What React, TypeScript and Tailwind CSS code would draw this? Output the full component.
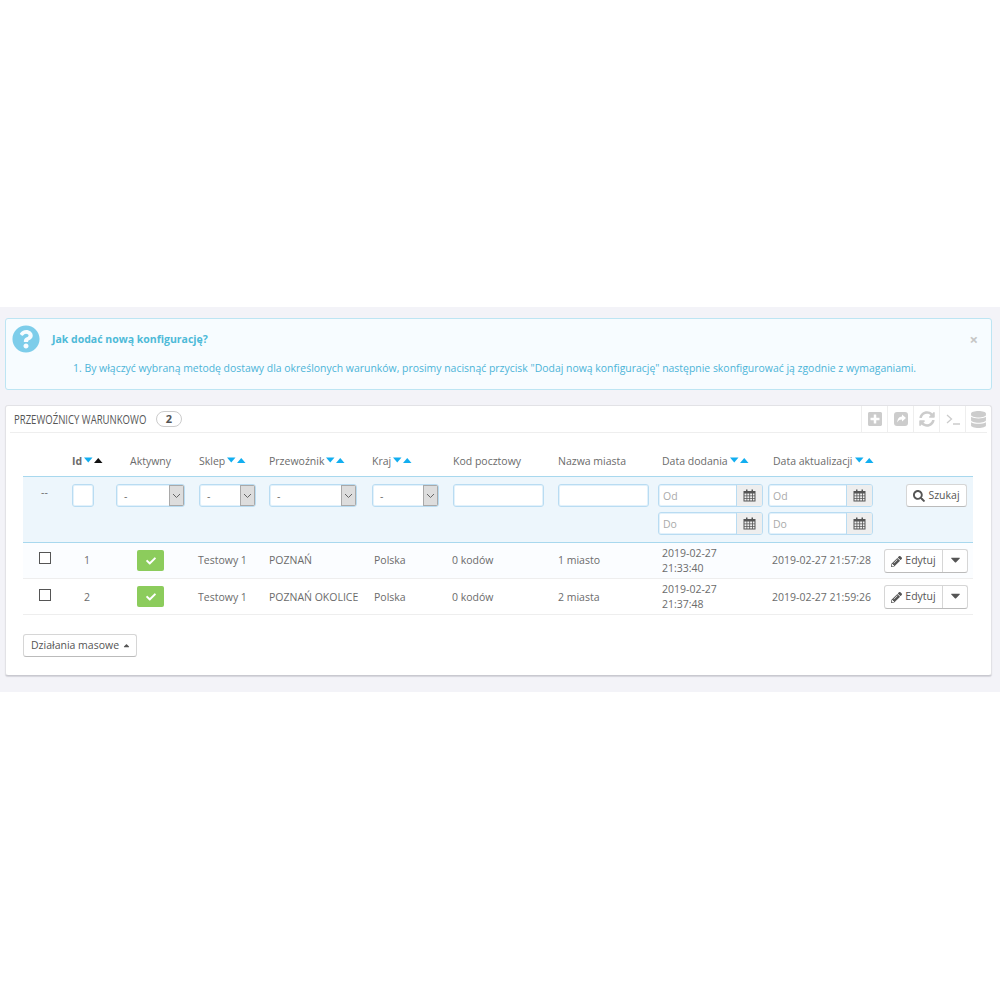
import { FaQuestionCircle, FaPlusSquare, FaSyncAlt, FaDatabase, FaSearch, FaPencilAlt, FaCheck, FaCaretDown, FaCaretUp } from "react-icons/fa";

const cols = "grid grid-cols-[49px_44px_83px_70px_103px_81px_105px_100px_110px_116px_89px]";

function Sort({ active }: { active?: boolean }) {
  return (
    <svg width="19" height="7" viewBox="0 0 19 7" className="relative -top-[1px] ml-[2px] inline-block shrink-0">
      <path d="M0 0.5h8.5L4.25 5.5z" fill="#12aef0" />
      <path d="M10 6h8.5L14.25 1z" fill={active ? "#111111" : "#12aef0"} />
    </svg>
  );
}

function Head({ label, sort, bold, active }: { label: string; sort?: boolean; bold?: boolean; active?: boolean }) {
  return (
    <div className={`flex h-[31px] items-center whitespace-nowrap pt-[2px] text-[10.5px] text-[#6b6b6b] ${bold ? "font-bold" : ""}`}>
      {label}
      {sort && <Sort active={active} />}
    </div>
  );
}

const field = "rounded-[3px] border border-[#b9dcf2] shadow-[inset_0_0_0_1px_#e2f1fb]";

function Select({ w }: { w: string }) {
  return (
    <div className={`flex h-[23px] overflow-hidden bg-white ${field} ${w}`}>
      <div className="flex-1 pl-[7px] pt-[4px] text-[10.5px] text-[#6b6b6b]">-</div>
      <div className="flex w-[15px] items-center justify-center border border-[#a9a9a9] bg-[#dddddd]">
        <svg width="9" height="6" viewBox="0 0 9 6"><path d="M1 1l3.5 3.5L8 1" fill="none" stroke="#666666" strokeWidth="1" /></svg>
      </div>
    </div>
  );
}

function Calendar() {
  return (
    <svg width="13" height="13" viewBox="0 0 13 13">
      <path d="M3 0.5h1.5v1.5h4V0.5H10v1.5h2.5v10.5H.5V2H3z" fill="#555555" />
      <path d="M1.5 4.5h2v2h-2zM4.3 4.5h2v2h-2zM7.1 4.5h2v2h-2zM9.9 4.5h1.6v2H9.9zM1.5 7.3h2v2h-2zM4.3 7.3h2v2h-2zM7.1 7.3h2v2h-2zM9.9 7.3h1.6v2H9.9zM1.5 10h2v1.5h-2zM4.3 10h2v1.5h-2zM7.1 10h2v1.5h-2zM9.9 10h1.6v1.5H9.9z" fill="#eeeeee" />
    </svg>
  );
}

function DateInput({ ph }: { ph: string }) {
  return (
    <div className={`flex h-[23px] w-[105px] overflow-hidden bg-white ${field}`}>
      <div className="flex-1 pl-[4px] pt-[4px] text-[10.5px] text-[#aaaaaa]">{ph}</div>
      <div className="flex w-[26px] items-center justify-center border-l border-[#b9dcf2] bg-[#eeeeee]">
        <Calendar />
      </div>
    </div>
  );
}

function Row({ id, name, city, d1, d2, t, last }: { id: string; name: string; city: string; d1: string; d2: string; t: string; last?: boolean }) {
  const cell = `flex items-center text-[10.5px] text-[#6b6b6b] ${last ? "pt-[3px]" : "pt-[1px]"}`;
  return (
    <div className={`${cols} h-[36px] border-b ${last ? "border-[#eeeeee] bg-white" : "border-[#eeeeee] bg-[#fbfdff]"}`}>
      <div className={`flex items-start justify-start pl-[16px] ${last ? "pt-[10px]" : "pt-[9px]"}`}>
        <span className="block h-[12px] w-[12px] border border-[#555555] bg-white" />
      </div>
      <div className={`${cell} pl-[12px]`}>{id}</div>
      <div className="flex items-center pl-[21px]">
        <span className="flex h-[21px] w-[27px] items-center justify-center rounded-[2px] bg-[#8ccc5c] text-[10px] text-white"><FaCheck /></span>
      </div>
      <div className={`${cell} -ml-px`}>Testowy 1</div>
      <div className={`${cell} whitespace-nowrap`}>{name}</div>
      <div className={`${cell} pl-[2px]`}>Polska</div>
      <div className={`${cell} -ml-px`}>0 kodów</div>
      <div className={cell}>{city}</div>
      <div className={`flex items-center pl-[4px] pt-[1px] text-[10.5px] leading-[15px] text-[#6b6b6b]`}>{d1}<br />{d2}</div>
      <div className={`${cell} whitespace-nowrap pl-[4px]`}>{t}</div>
      <div className="flex items-center">
        <div className="flex h-[24px] w-[84px] rounded-[3px] border border-[#d6d6d6] border-b-[#bbbbbb] bg-white text-[10.5px] text-[#555555]">
          <div className="flex w-[58px] items-center justify-center gap-[3px] border-r border-[#d6d6d6] pt-[1px]"><FaPencilAlt className="text-[11px]" />Edytuj</div>
          <div className="flex flex-1 items-center justify-center pb-[2px] text-[15px]"><FaCaretDown /></div>
        </div>
      </div>
    </div>
  );
}

const Tool = ({ children }: { children: React.ReactNode }) => (
  <div className="flex h-[27px] w-[26px] items-center justify-center border-l border-[#eeeeee] text-[16px] text-[#cccccc]">{children}</div>
);

export default function App() {
  return (
    <div className="min-h-[1000px] bg-white font-['Open_Sans',sans-serif]">
      <div className="h-[307px]" />
      <div className="bg-[#f3f3f8] pb-[16px] pl-[5px] pr-[8px] pt-[11px]">
        <div className="flex h-[72px] flex-col rounded-[3px] border border-[#bde5f3] bg-[#f7fcff]">
          <div className="relative flex h-[41px] items-center pl-[46px] text-[10.5px] font-bold text-[#4ebad8]">
            Jak dodać nową konfigurację?
            <span className="absolute left-[6px] top-[6px] text-[28px] text-[#7dcdea]"><FaQuestionCircle /></span>
            <span className="absolute right-[13px] top-[10px] text-[15px] font-bold leading-[20px] text-[#c6c6c6]">×</span>
          </div>
          <div className="pl-[67px] pt-[1px] text-[10.45px] text-[#4cb4d8]">
            1. By włączyć wybraną metodę dostawy dla określonych warunków, prosimy nacisnąć przycisk "Dodaj nową konfigurację" następnie skonfigurować ją zgodnie z wymaganiami.
          </div>
        </div>

        <div className="mt-[15px] h-[271px] rounded-[3px] border border-[#e2e2e6] border-b-[#c9c9d0] bg-white shadow-[0_1px_1px_#d5d5dc]">
          <div className="mx-[4px] flex h-[27px] items-center justify-between border-b border-[#eeeeee]">
            <div className="flex items-center pl-[4px]">
              <span className="w-[134px] origin-left scale-x-[0.735] whitespace-nowrap text-[13px] leading-none text-[#555555]">PRZEWOŹNICY WARUNKOWO</span>
              <span className="ml-[8px] flex h-[16px] w-[26px] items-center justify-center rounded-full border border-[#cccccc] text-[11px] font-bold text-[#555555]">2</span>
            </div>
            <div className="-mr-[4px] flex">
              <Tool><FaPlusSquare /></Tool>
              <Tool>
                <svg width="14" height="14" viewBox="0 0 14 14">
                  <rect width="14" height="14" rx="3" fill="#cccccc" />
                  <path d="M8 2.5l4 3.5-4 3.5V7.6C6 7.6 4.4 8.2 3.4 10.5 3.2 7 5 4.6 8 4.4z" fill="#ffffff" />
                </svg>
              </Tool>
              <Tool><FaSyncAlt /></Tool>
              <Tool>
                <svg width="14" height="11" viewBox="0 0 14 11"><path d="M1 1l4.5 4L1 9M7 10h7" fill="none" stroke="#cccccc" strokeWidth="1.3" /></svg>
              </Tool>
              <Tool><FaDatabase className="text-[17px]" /></Tool>
            </div>
          </div>

          <div className="ml-[17px] mt-[12px] w-[950px]">
            <div className={`${cols} border-b border-[#a8d8ee]`}>
              <div />
              <Head label="Id" sort bold active />
              <div className="pl-[14px]"><Head label="Aktywny" /></div>
              <Head label="Sklep" sort />
              <Head label="Przewoźnik" sort />
              <Head label="Kraj" sort />
              <Head label="Kod pocztowy" />
              <Head label="Nazwa miasta" />
              <div className="pl-[4px]"><Head label="Data dodania" sort /></div>
              <div className="pl-[5px]"><Head label="Data aktualizacji" sort /></div>
              <div />
            </div>

            <div className={`${cols} h-[66px] border-b border-[#a8d8ee] bg-[#edf6fc] pt-[7px]`}>
              <div className="pl-[18px] pt-[1px] text-[10.5px] leading-[14px] text-[#6b6b6b]">--</div>
              <div><div className={`h-[23px] w-[22px] bg-white ${field}`} /></div>
              <div><Select w="w-[69px]" /></div>
              <div><Select w="w-[57px]" /></div>
              <div><Select w="w-[88px]" /></div>
              <div><Select w="w-[67px]" /></div>
              <div><div className={`h-[23px] w-[91px] bg-white ${field}`} /></div>
              <div><div className={`h-[23px] w-[91px] bg-white ${field}`} /></div>
              <div className="flex flex-col gap-[5px]"><DateInput ph="Od" /><DateInput ph="Do" /></div>
              <div className="flex flex-col gap-[5px]"><DateInput ph="Od" /><DateInput ph="Do" /></div>
              <div className="pl-[22px]">
                <div className="flex h-[23px] w-[61px] items-center justify-center gap-[3px] rounded-[3px] border border-[#d6d6d6] border-b-[#bbbbbb] bg-white text-[10.5px] text-[#555555]"><FaSearch className="text-[12px]" />Szukaj</div>
              </div>
            </div>

            <Row id="1" name="POZNAŃ" city="1 miasto" d1="2019-02-27" d2="21:33:40" t="2019-02-27 21:57:28" />
            <Row id="2" name="POZNAŃ OKOLICE" city="2 miasta" d1="2019-02-27" d2="21:37:48" t="2019-02-27 21:59:26" last />

            <div className="mt-[19px] flex h-[23px] w-[114px] items-center justify-center gap-[3px] rounded-[3px] border border-[#d6d6d6] border-b-[#bbbbbb] bg-white pl-[2px] text-[10.5px] text-[#555555]">
              Działania masowe <FaCaretUp className="text-[9px]" />
            </div>
          </div>
        </div>
      </div>
    </div>
  );
}
